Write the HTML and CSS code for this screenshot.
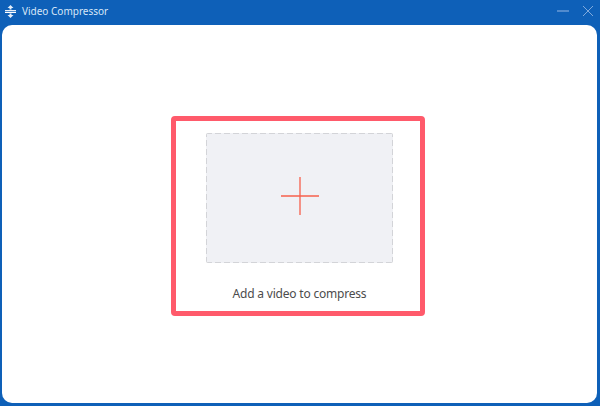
FILE: index.html
```html
<!DOCTYPE html>
<html lang="en">
<head>
<meta charset="utf-8">
<title>Video Compressor</title>
<link rel="stylesheet" href="styles.css">
</head>
<body>
<div class="window">
  <header class="titlebar">
    <svg class="logo" width="11" height="13" viewBox="0 0 11 13" aria-hidden="true">
      <path d="M5.5 0 L8.5 3 H6.5 V4.6 H4.5 V3 H2.5 Z M5.5 13 L2.5 10 H4.5 V8.4 H6.5 V10 H8.5 Z" fill="#e4eefa"/>
      <rect x="0" y="5.1" width="11" height="1.1" fill="#ffffff"/>
      <rect x="0" y="6.9" width="11" height="1.1" fill="#ffffff"/>
    </svg>
    <span class="title">Video Compressor</span>
    <div class="controls">
      <svg width="12" height="12" viewBox="0 0 12 12" aria-hidden="true"><path d="M0 6 H12" stroke="#7fa9dc" stroke-width="1.2"/></svg>
      <svg width="12" height="12" viewBox="0 0 12 12" aria-hidden="true"><path d="M1 1 L11 11 M11 1 L1 11" stroke="#7fa9dc" stroke-width="1"/></svg>
    </div>
  </header>
  <main class="panel">
    <section class="frame">
      <div class="drop">
        <svg width="38" height="38" viewBox="0 0 38 38" aria-hidden="true"><path d="M0 19 H38 M19 0 V38" stroke="#f6604c" stroke-width="1.3"/></svg>
      </div>
      <p class="label">Add a video to compress</p>
    </section>
  </main>
</div>
</body>
</html>
```
FILE: styles.css
```css
* { box-sizing: border-box; }
html, body { margin: 0; height: 100%; }
body { font-family: "Noto Sans", "Liberation Sans", sans-serif; background: #0e60b8; overflow: hidden; }
.window { display: flex; flex-direction: column; width: 600px; height: 406px; }
.titlebar { display: flex; align-items: center; height: 25px; flex: none; padding: 0 6px 3px 5px; color: #d7e6f7; font-size: 10px; }
.logo { flex: none; }
.title { margin-left: 6px; }
.controls { display: flex; gap: 13px; margin-left: auto; }
.panel { flex: 1; margin: 0 3px 3px 2px; background: #fff; border-radius: 10px; display: flex; justify-content: center; padding: 91px 3px 0 0; }
.frame { width: 254px; height: 200px; border: 5px solid #ff5a6b; border-radius: 4px; display: flex; flex-direction: column; align-items: center; padding: 12px 0 0 3px; }
.drop {
  width: 187px; height: 130px; padding-bottom: 5px; display: flex; align-items: center; justify-content: center; border-radius: 2px;
  background-color: #f0f1f5;
  background-image:
    repeating-linear-gradient(90deg, #d3d4d8 0 6px, transparent 6px 9px),
    repeating-linear-gradient(90deg, #d3d4d8 0 6px, transparent 6px 9px),
    repeating-linear-gradient(0deg, #d3d4d8 0 6px, transparent 6px 9px),
    repeating-linear-gradient(0deg, #d3d4d8 0 6px, transparent 6px 9px);
  background-size: 100% 1px, 100% 1px, 1px 100%, 1px 100%;
  background-position: 0 0, 0 100%, 0 0, 100% 0;
  background-repeat: no-repeat;
}
.label { margin: 23px 0 0; font-size: 12px; letter-spacing: -0.2px; line-height: 16px; color: #4c4c4c; }
```
